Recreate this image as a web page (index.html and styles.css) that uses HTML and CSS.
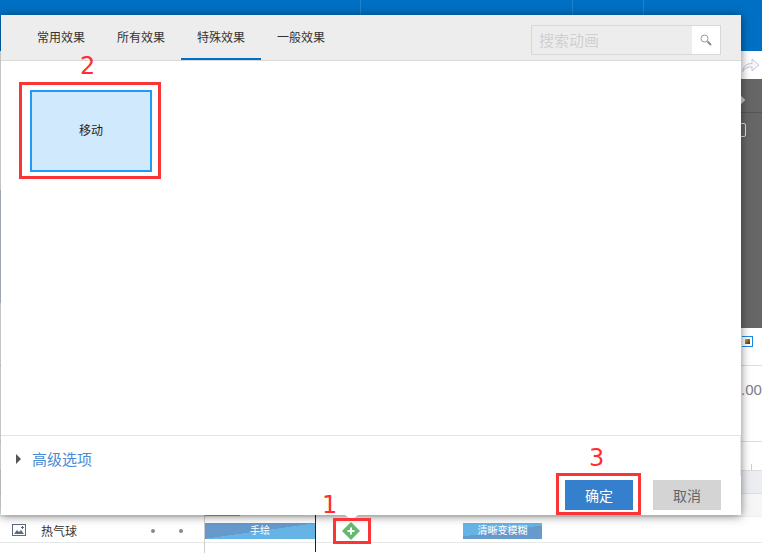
FILE: index.html
```html
<!DOCTYPE html>
<html lang="zh">
<head>
<meta charset="utf-8">
<title>添加动画</title>
<link rel="stylesheet" href="styles.css">
</head>
<body>
<div class="app">
  <header class="topbar"><i class="sep sep-a"></i><i class="sep sep-b"></i><i class="sep sep-c"></i></header>
  <div class="toolbar">
    <svg class="redo" width="18" height="16" viewBox="0 0 18 16"><path d="M1 14.500c0-5 3-8 9-8V2l7 6-7 6v-4c-4 0-7 1-9 4.500z" fill="#f4f6fa" stroke="#c3c9d6"/></svg>
  </div>
  <div class="stage">
    <div class="stage-rule"></div>
    <div class="stage-diamond"></div>
    <div class="stage-outline"></div>
  </div>
  <div class="props">
    <div class="prop-row prop-a"><span class="swatch"><i></i></span></div>
    <div class="prop-row prop-b"><span class="num">.00</span></div>
    <div class="prop-row prop-c"><span class="tick"></span></div>
    <div class="prop-row prop-d"></div>
    <div class="prop-row prop-e"></div>
  </div>
  <div class="track">
    <svg class="track-icon" width="14" height="12" viewBox="0 0 14 12"><rect x=".5" y=".5" width="13" height="11" fill="#fff" stroke="#5c6a80"/><path d="M2 10l3-4 2 2 2-2 3 4z" fill="#5c6a80"/><path d="M10.500 2v3M9 3.500h3" stroke="#5c6a80"/></svg>
    <span class="track-name">热气球</span>
    <span class="dot dot-a"></span>
    <span class="dot dot-b"></span>
    <span class="col-line"></span>
    <span class="clip clip-a">手绘</span>
    <span class="playhead"></span>
    <svg class="add" width="18" height="18" viewBox="0 0 18 18"><path d="M9 0 18 9 9 18 0 9z" fill="#62bb6a"/><path d="M9 5.500v7M5.500 9h7" stroke="#fff" stroke-width="2"/></svg>
    <span class="clip clip-b">清晰变模糊</span>
  </div>
</div>
<div class="edge"></div>

<section class="dialog">
  <div class="tabs">
    <nav class="tablist">
      <a class="tab">常用效果</a>
      <a class="tab">所有效果</a>
      <a class="tab active">特殊效果</a>
      <a class="tab">一般效果</a>
    </nav>
    <div class="search">
      <span class="search-input">搜索动画</span>
      <span class="search-btn">
        <svg width="12" height="12" viewBox="0 0 12 12"><circle cx="4.500" cy="4.500" r="3.500" fill="none" stroke="#9a9a9a"/><path d="M7.500 7.500l3.500 3.500" stroke="#8a8a8a" stroke-width="2"/></svg>
      </span>
    </div>
  </div>
  <div class="effects">
    <div class="effect">移动</div>
  </div>
  <div class="footer">
    <div class="advanced"><span class="caret"></span><span class="advanced-label">高级选项</span></div>
    <div class="actions">
      <button class="btn primary">确定</button>
      <button class="btn muted">取消</button>
    </div>
  </div>
</section>

<div class="prev-clip"></div>
<div class="notch"></div>
<div class="mark mark-effect"></div>
<div class="mark mark-add"></div>
<div class="mark mark-ok"></div>
<span class="num-label n1">1</span>
<span class="num-label n2">2</span>
<span class="num-label n3">3</span>
</body>
</html>
```
FILE: styles.css
```css
* { box-sizing: border-box; }
html, body { margin: 0; height: 553px; overflow: hidden; background: #fff; }
body { font-family: "Liberation Sans", "Noto Sans CJK SC", sans-serif; font-size: 12px; color: #333; position: relative; }

.app { width: 762px; height: 553px; display: flex; flex-direction: column; }
.topbar { height: 51px; background: #0070c4; flex: none; display: flex; }
.sep { width: 1px; height: 15px; background: #1f83cf; }
.sep-a { margin-left: 360px; }
.sep-b { margin-left: 211px; }
.sep-c { margin-left: 70px; }
.toolbar { height: 28px; flex: none; background: #fff; display: flex; justify-content: flex-end; align-items: center; padding-right: 2px; }
.stage { height: 249px; flex: none; background: #666; position: relative; margin-left: 1px; }
.stage-rule { position: absolute; left: 740px; right: 0; top: 33px; height: 1px; background: #555; }
.stage-diamond { position: absolute; left: 737px; top: 18px; width: 6px; height: 6px; background: #ccc; transform: rotate(45deg); }
.stage-outline { position: absolute; left: 735px; top: 44px; width: 10px; height: 14px; border: 1px solid #ddd; border-radius: 2px; }
.props { height: 188px; flex: none; background: #fff; display: flex; flex-direction: column; }
.prop-row { display: flex; justify-content: flex-end; align-items: center; border-bottom: 1px solid #ddd; }
.prop-a { height: 38px; padding-bottom: 11px; }
.prop-b { height: 76px; align-items: flex-start; padding-top: 15px; }
.prop-c { height: 29px; align-items: flex-end; padding-right: 10px; }
.prop-d { height: 23px; background: #ebedf1; border-bottom: 1px solid #ddd; }
.prop-e { height: 22px; background: #f6f6f6; border-bottom: 0; }
.swatch { width: 11px; height: 11px; border: 1px solid #1e88e5; border-left: 0; margin-right: 9px; display: flex; align-items: center; justify-content: center; background: #fff; }
.swatch i { width: 5px; height: 5px; background: linear-gradient(135deg, #e8a020, #3a3020); }
.num { font-size: 15px; line-height: 18px; color: #7a8090; width: 21px; }
.tick { width: 1px; height: 6px; background: #ccc; }

.track { height: 27px; flex: none; border-top: 1px solid #eee; border-bottom: 1px solid #e8e8e8; position: relative; background: #fff; }
.track-icon { position: absolute; left: 12px; top: 7px; }
.track-name { position: absolute; left: 41px; top: 8px; font-size: 12px; line-height: 14px; color: #333; }
.dot { position: absolute; top: 12px; width: 4px; height: 4px; border-radius: 50%; background: #888; }
.dot-a { left: 151px; }
.dot-b { left: 179px; }
.col-line { position: absolute; left: 204px; top: -26px; bottom: -11px; width: 1px; background: #ccc; }
.clip { position: absolute; top: 6px; height: 16px; color: #fff; font-size: 10px; line-height: 16px; text-align: center; }
.clip-a { left: 205px; width: 110px; background: linear-gradient(172deg, #6699cc 50%, #66b3e6 50%); }
.clip-b { left: 463px; width: 79px; background: linear-gradient(172deg, #66b3e6 50%, #6699cc 50%); }
.playhead { position: absolute; left: 315px; top: -2px; bottom: -10px; width: 1px; background: #222; }
.add { position: absolute; left: 342px; top: 5px; }

.edge { position: absolute; left: 0; top: 190px; width: 1px; height: 113px; background: #cfd8e6; }

.dialog { position: absolute; left: 1px; top: 15px; width: 740px; height: 500px; background: #fff; display: flex; flex-direction: column; box-shadow: 0 1px 9px rgba(0,0,0,.5); }
.tabs { height: 46px; flex: none; background: #ededed; border-bottom: 1px solid #d9d9d9; display: flex; justify-content: space-between; padding: 0 20px; }
.tablist { display: flex; }
.tab { width: 80px; height: 45px; display: flex; align-items: center; justify-content: center; font-size: 12px; color: #333; padding-bottom: 3px; }
.tab.active { border-bottom: 2px solid #0070c4; padding-bottom: 1px; }
.search { width: 190px; height: 30px; margin-top: 10px; border: 1px solid #d5d8dd; display: flex; }
.search-input { flex: 1; font-size: 15px; line-height: 30px; padding-left: 7px; color: #d0d0d0; }
.search-btn { width: 28px; background: #fff; display: flex; align-items: center; justify-content: center; }
.effects { flex: 1; padding: 29px 0 0 29px; }
.effect { width: 122px; height: 82px; background: #d0e9fd; border: 2px solid #1e9bf5; display: flex; align-items: center; justify-content: center; font-size: 12px; color: #222; padding-bottom: 4px; }
.footer { height: 80px; flex: none; border-top: 1px solid #e3e3e3; position: relative; }
.footer::after { content: ""; position: absolute; right: 0; top: 0; width: 1px; height: 40px; background: #e8e8e8; }
.advanced { position: absolute; left: 15px; top: 15px; display: flex; align-items: center; gap: 11px; }
.caret { width: 0; height: 0; border-left: 5px solid #555; border-top: 5px solid transparent; border-bottom: 5px solid transparent; margin-bottom: 3px; }
.advanced-label { font-size: 15px; color: #4a8ad4; line-height: 18px; }
.actions { position: absolute; right: 20px; top: 44px; display: flex; gap: 20px; }
.btn { width: 68px; height: 30px; border: 0; padding: 0; font-family: inherit; font-size: 14px; border-radius: 0; }
.primary { background: #3580cd; color: #fff; }
.muted { background: #d4d4d4; color: #666; }

.prev-clip { position: absolute; left: 205px; top: 515px; width: 100px; height: 1px; background: linear-gradient(90deg, #5f7f6f 35%, #aaa 35%); }
.notch { position: absolute; left: 345px; top: 515px; width: 13px; height: 3px; background: #fff; clip-path: polygon(0 0, 100% 0, 70% 100%, 30% 100%); }
.mark { position: absolute; border: 3px solid #f93535; }
.mark-effect { left: 19px; top: 82px; width: 142px; height: 97px; }
.mark-add { left: 333px; top: 518px; width: 38px; height: 26px; }
.mark-ok { left: 556px; top: 473px; width: 85px; height: 42px; }
.num-label { position: absolute; color: #ff2f2f; font-size: 24px; line-height: 28px; font-family: "DejaVu Sans", sans-serif; }
.n1 { left: 322px; top: 491px; }
.n2 { left: 80px; top: 52px; }
.n3 { left: 589px; top: 444px; }
```
